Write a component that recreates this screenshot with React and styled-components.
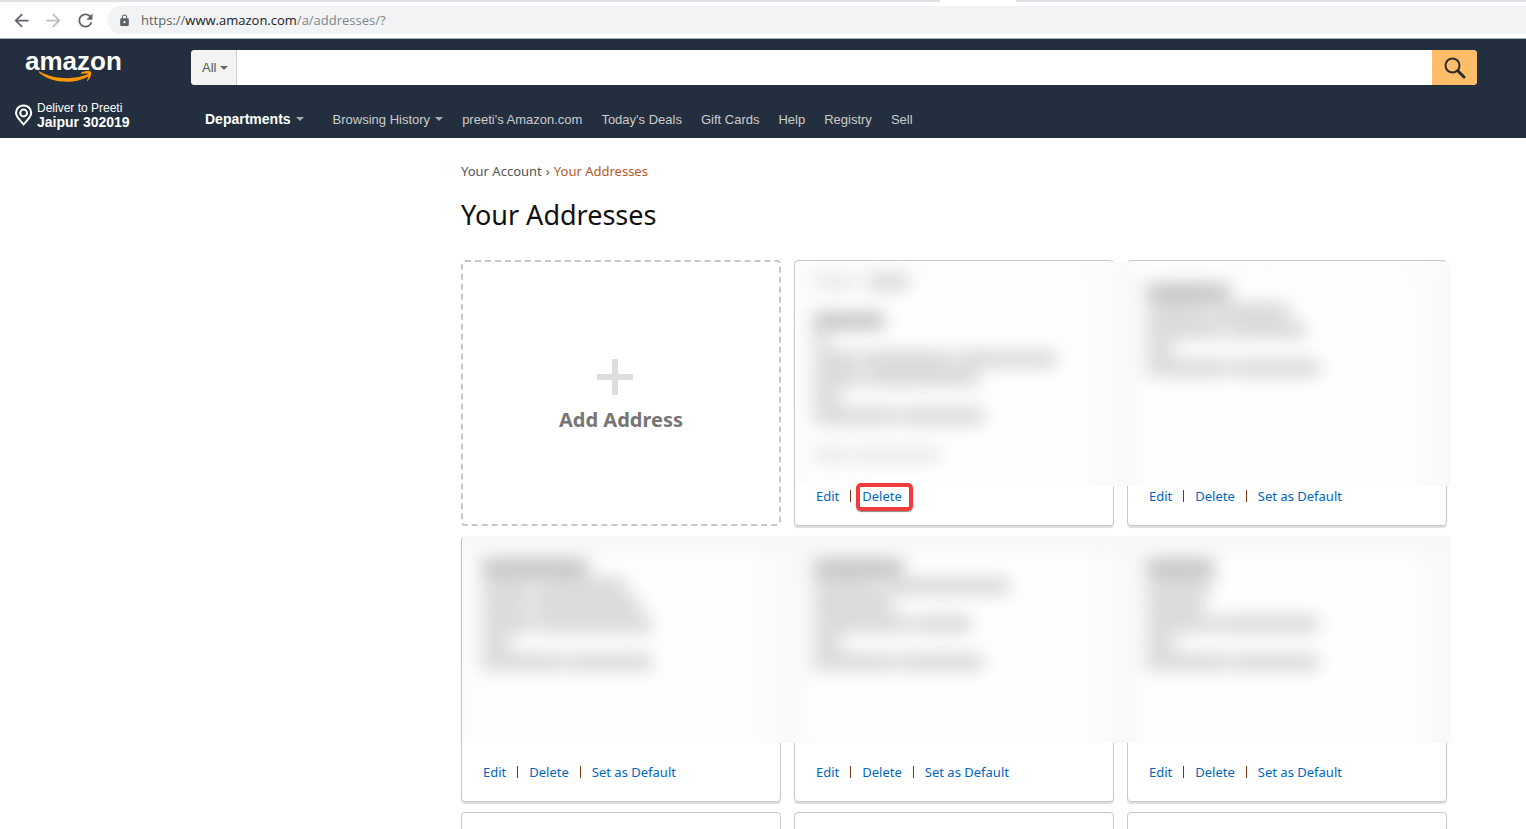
import React from 'react';
import styled, { createGlobalStyle } from 'styled-components';
import { MdArrowBack, MdArrowForward, MdLock, MdRefresh } from 'react-icons/md';

const NAV_LINKS = [
  "preeti's Amazon.com",
  "Today's Deals",
  'Gift Cards',
  'Help',
  'Registry',
  'Sell',
];

// each line is a list of word widths, hidden behind the blur
const FIRST_ROW = [
  {
    label: [42, 40],
    lines: [[70], [14], [44, 90, 100], [48, 112], [26], [82, 84]],
    note: [36, 86],
    isDefault: true,
    marked: true,
  },
  { lines: [[82], [60, 78], [78, 76], [26], [82, 86]] },
];

const SECOND_ROW = [
  { lines: [[106], [50, 90], [46, 108], [50, 116], [28], [82, 84]] },
  { lines: [[90], [66, 126], [80], [98, 56], [28], [82, 84]] },
  { lines: [[68], [66], [58], [68, 100], [28], [82, 86]] },
];

const Logo = () => (
  <svg width='100' height='35' viewBox='0 0 100 35' overflow='visible' role='img'>
    <text
      x='1'
      y='20'
      fill='#fff'
      fontSize='26'
      fontWeight='700'
      fontFamily='"Liberation Sans", Arial, sans-serif'>
      amazon
    </text>
    <path
      fill='#f90'
      d='M15.6 21.4C27 28 48 31 63 24.6C65.4 23.6 66.4 25.2 64.4 26.4C50 34.6 27 33.2 15 22.4C14.4 21.6 14.9 21 15.6 21.4Z'
    />
    <path
      fill='#f90'
      d='M57.5 22.6C60 20.8 66 20.6 67 21.8C67.8 23.5 66.5 28.5 63.5 31C63 31.3 62.7 31 63 30.4C64 28 65 25 64.4 24.2C63.4 23.2 60 23.7 58 23.9C57.2 23.9 57 23 57.5 22.6Z'
    />
  </svg>
);

const PinIcon = () => (
  <svg width='18' height='22' viewBox='0 0 18 22' fill='none' stroke='#fff' strokeWidth='2'>
    <path d='M8.6 20.4C6 17 1 13.4 1 8.8A7.6 7.4 0 0 1 16.2 8.8C16.2 13.4 11.2 17 8.6 20.4Z' />
    <circle cx='8.6' cy='9' r='3.4' />
  </svg>
);

const SearchIcon = () => (
  <svg width='22' height='22' viewBox='0 0 22 22' fill='none' stroke='#2b2b2b'>
    <circle cx='8.5' cy='8.5' r='7' strokeWidth='2' />
    <path d='M13.8 13.8L20 20' strokeWidth='3' strokeLinecap='round' />
  </svg>
);

const Line = ({ words, strong }) => (
  <WordLine>
    {words.map((w, i) => (
      <Word key={i} $strong={strong} style={{ width: w }} />
    ))}
  </WordLine>
);

const AddressCard = ({ address, first, last, tall }) => (
  <Card>
    <Veil $first={first} $last={last} $tall={tall} $labelled={address.label}>
      <Blurred>
        {address.label && (
          <LabelLine>
            <FaintLine>
              <Line words={[address.label[0]]} />
            </FaintLine>
            <Line words={[address.label[1]]} />
          </LabelLine>
        )}
        {address.lines.map((words, i) => (
          <Line key={i} words={words} strong={i === 0} />
        ))}
        {address.note && (
          <NoteLine>
            <Line words={address.note} />
          </NoteLine>
        )}
      </Blurred>
    </Veil>
    <Actions>
      <ActionLink href='#edit'>Edit</ActionLink>
      <Divider />
      <ActionLink href='#delete' $marked={address.marked}>
        Delete
      </ActionLink>
      {!address.isDefault && (
        <>
          <Divider />
          <ActionLink href='#default'>Set as Default</ActionLink>
        </>
      )}
    </Actions>
  </Card>
);

const App = () => {
  return (
    <Page>
      <GlobalStyle />
      <TabStrip>
        <TabEdge $side='left' />
        <TabEdge $side='right' />
      </TabStrip>
      <Toolbar>
        <ToolButton aria-label='Back'>
          <MdArrowBack size={21} />
        </ToolButton>
        <ToolButton aria-label='Forward' $off>
          <MdArrowForward size={21} />
        </ToolButton>
        <ToolButton aria-label='Reload'>
          <MdRefresh size={21} />
        </ToolButton>
        <UrlBar>
          <MdLock size={13} />
          <Url>
            https://<b>www.amazon.com</b>
            <span>/a/addresses/?</span>
          </Url>
        </UrlBar>
      </Toolbar>

      <Header>
        <HeaderTop>
          <LogoLink href='#home' aria-label='amazon'>
            <Logo />
          </LogoLink>
          <SearchForm>
            <ScopeBox>
              <Scope aria-label='Department'>
                <option>All</option>
              </Scope>
              <Caret $color='#666' />
            </ScopeBox>
            <SearchInput type='text' aria-label='Search' />
            <SearchButton type='button' aria-label='Go'>
              <SearchIcon />
            </SearchButton>
          </SearchForm>
        </HeaderTop>
        <HeaderBottom>
          <Location href='#location'>
            <PinIcon />
            <span>
              Deliver to Preeti
              <b>Jaipur 302019</b>
            </span>
          </Location>
          <Nav>
            <Departments href='#departments'>
              Departments
              <Caret />
            </Departments>
            <NavLink href='#history'>
              Browsing History
              <Caret />
            </NavLink>
            {NAV_LINKS.map((name) => (
              <NavLink key={name} href='#nav'>
                {name}
              </NavLink>
            ))}
          </Nav>
        </HeaderBottom>
      </Header>

      <Main>
        <Breadcrumb>
          <a href='#account'>Your Account</a>
          <i>›</i>
          <span>Your Addresses</span>
        </Breadcrumb>
        <Title>Your Addresses</Title>
        <Grid>
          <AddCard href='#add'>
            <Plus />
            Add Address
          </AddCard>
          {FIRST_ROW.map((address, i) => (
            <AddressCard key={i} address={address} first={i === 0} last={i === 1} tall />
          ))}
          {SECOND_ROW.map((address, i) => (
            <AddressCard key={i} address={address} first={i === 0} last={i === 2} />
          ))}
          <Card />
          <Card />
          <Card />
        </Grid>
      </Main>
    </Page>
  );
};

const GlobalStyle = createGlobalStyle`
  * {
    box-sizing: border-box;
  }
  body {
    margin: 0;
    background: #fff;
    color: #111;
    font-family: 'Noto Sans', 'Open Sans', sans-serif;
    font-size: 13px;
    line-height: 19px;
  }
  a {
    text-decoration: none;
  }
`;

const Page = styled.div`
  height: 100vh;
  overflow: hidden;
`;
const TabStrip = styled.div`
  display: flex;
  justify-content: space-between;
  height: 2px;
`;
const TabEdge = styled.div`
  flex: ${({ $side }) => ($side === 'left' ? '0 0 940px' : '0 1 510px')};
  background: #dee1e6;
`;
const Toolbar = styled.div`
  display: flex;
  align-items: center;
  gap: 11px;
  height: 37px;
  padding-left: 11px;
  border-bottom: 1px solid #a9adac;
`;
const ToolButton = styled.button`
  display: flex;
  padding: 0;
  border: 0;
  background: none;
  color: ${({ $off }) => ($off ? '#babcbe' : '#5f6368')};
`;
const UrlBar = styled.div`
  display: flex;
  flex: 1;
  align-items: center;
  gap: 10px;
  height: 28px;
  padding-left: 11px;
  border-radius: 14px 0 0 14px;
  background: #f1f3f4;
  color: #5f6368;
`;
const Url = styled.div`
  font-family: 'Open Sans', sans-serif;
  font-size: 13px;
  b {
    color: #202124;
    font-weight: normal;
  }
  span {
    color: #80868b;
  }
`;

const Header = styled.header`
  padding: 11px 0 8px;
  background: #232f3e;
  font-family: 'Liberation Sans', Arial, sans-serif;
`;
const HeaderTop = styled.div`
  display: flex;
  height: 35px;
  padding-right: 49px;
`;
const LogoLink = styled.a`
  width: 191px;
  padding-left: 24px;
`;
const SearchForm = styled.form`
  display: flex;
  flex: 1;
  overflow: hidden;
  border-radius: 4px;
  background: #fff;
`;
const ScopeBox = styled.label`
  display: flex;
  align-items: center;
  width: 46px;
  padding-left: 11px;
  border-right: 1px solid #cdcdcd;
  background: #f3f3f3;
`;
const Scope = styled.select`
  width: 18px;
  padding: 0;
  border: 0;
  appearance: none;
  background: none;
  color: #555;
  font: 13px 'Liberation Sans', Arial, sans-serif;
`;
const Caret = styled.span`
  width: 8px;
  border: 4px solid transparent;
  border-top-color: ${({ $color }) => $color || '#a7acb2'};
  border-bottom: 0;
`;
const SearchInput = styled.input`
  flex: 1;
  padding: 0 8px;
  border: 0;
  outline: 0;
`;
const SearchButton = styled.button`
  display: flex;
  align-items: center;
  justify-content: center;
  width: 45px;
  padding: 0;
  border: 0;
  background: #febd69;
`;
const HeaderBottom = styled.div`
  display: flex;
  height: 45px;
  padding: 14px 0 0 15px;
`;
const Location = styled.a`
  display: flex;
  align-items: center;
  gap: 4px;
  width: 190px;
  height: 31px;
  color: #fff;
  font-size: 12px;
  line-height: 14px;
  b {
    display: block;
    font-size: 14px;
  }
`;
const Nav = styled.nav`
  display: flex;
  align-items: center;
  gap: 19px;
  height: 40px;
`;
const NavLink = styled.a`
  display: flex;
  align-items: center;
  gap: 5px;
  color: #ccc;
  font-size: 13px;
  white-space: nowrap;
`;
const Departments = styled(NavLink)`
  margin-right: 10px;
  color: #fff;
  font-size: 14px;
  font-weight: bold;
`;

const Main = styled.main`
  padding: 24px 79px 0 461px;
`;
const Breadcrumb = styled.div`
  display: flex;
  gap: 4px;
  color: #b9592b;
  a,
  i {
    color: #555;
    font-style: normal;
  }
`;
const Title = styled.h1`
  margin: 16px 0 27px;
  font-size: 27px;
  font-weight: normal;
  line-height: 36px;
`;
const Grid = styled.div`
  display: grid;
  grid-template-columns: repeat(3, 1fr);
  gap: 10px 13px;
`;
const Card = styled.div`
  position: relative;
  display: flex;
  flex-direction: column;
  justify-content: flex-end;
  min-height: 266px;
  padding: 0 21px 19px;
  border: 1px solid #c7c7c7;
  border-radius: 4px;
  box-shadow: 0 2px 1px #ddd;
`;
const AddCard = styled.a`
  display: flex;
  flex-direction: column;
  align-items: center;
  justify-content: center;
  gap: 11px;
  min-height: 266px;
  padding-top: 7px;
  border: 2px dashed #c7c7c7;
  border-radius: 4px;
  color: #767676;
  font-size: 20px;
  font-weight: bold;
  line-height: 28px;
`;
const Plus = styled.span`
  width: 36px;
  height: 36px;
  margin-right: 12px;
  background: linear-gradient(#dddfdf, #dddfdf) center / 36px 6px no-repeat,
    linear-gradient(#dddfdf, #dddfdf) center / 6px 36px no-repeat;
`;

// covers the private part of a card and the gap up to the next one
const Veil = styled.div`
  position: absolute;
  z-index: 1;
  top: ${({ $tall }) => ($tall ? '1px' : '-1px')};
  right: ${({ $last }) => ($last ? '-5px' : '-14px')};
  left: ${({ $first }) => ($first ? '1px' : '-1px')};
  height: ${({ $tall }) => ($tall ? '224px' : '207px')};
  padding: ${({ $tall, $labelled }) => {
    if ($labelled) return '10px 18px';
    return $tall ? '20px 20px' : '21px 19px';
  }};
  overflow: hidden;
  background: ${({ $tall }) =>
      `linear-gradient(${$tall ? '#fbfbfb88' : '#f7f7f7'}, #fff0 30px)`},
    linear-gradient(
      90deg,
      ${({ $first }) => ($first ? '#fcfcfc' : '#f9f9f9')},
      #fefefe 24px,
      #fefefe calc(100% - 50px),
      #f9f9f9 calc(100% - 6px)
    );
`;
const Blurred = styled.div`
  filter: blur(9px);
`;
const WordLine = styled.div`
  display: flex;
  align-items: center;
  gap: 4px;
  height: 19px;
`;
const Word = styled.div`
  height: 14px;
  background: ${({ $strong }) => ($strong ? '#b2b4b4' : '#cdcfcf')};
`;
const LabelLine = styled.div`
  display: flex;
  gap: 12px;
  margin-bottom: 20px;
`;
const FaintLine = styled.div`
  opacity: 0.5;
`;
const NoteLine = styled(FaintLine)`
  margin-top: 20px;
`;

const Actions = styled.div`
  display: flex;
  align-items: center;
  gap: 11px;
  height: 20px;
`;
const ActionLink = styled.a`
  position: relative;
  z-index: 2;
  color: #0066c0;
  white-space: nowrap;
  ${({ $marked }) =>
    $marked &&
    `
    &::after {
      content: '';
      position: absolute;
      inset: -4px -11px -5px -6px;
      border: 4px solid #f23b3b;
      border-radius: 5px;
      box-shadow: 0 1px 1px #888;
    }
  `}
`;
const Divider = styled.span`
  width: 1px;
  height: 12px;
  background: #7a3512;
`;

export default App;
